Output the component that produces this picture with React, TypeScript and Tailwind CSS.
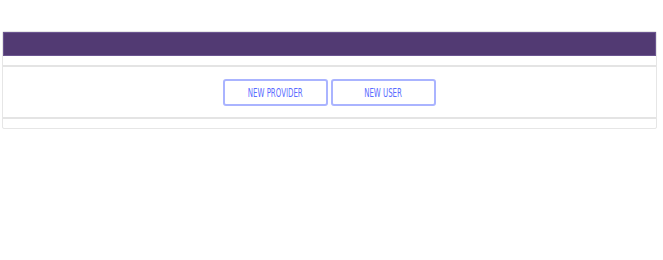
export default function App() {
  return (
    <div className="min-h-[260px] w-[663px] bg-white pt-[31px]" style={{ fontFamily: '"DejaVu Sans Condensed", "Liberation Sans", sans-serif' }}>
      <div className="ml-[2px] w-[655px] rounded-[2px] border border-[#e6e6e6]">
        <div className="h-[24px] border border-[#6b5590] bg-[#523a73]" />
        <div className="h-[11px] border-b-2 border-[#e4e4e4]" />
        <div className="flex h-[50px] items-center justify-center gap-[3px]">
          <button className="flex h-[27px] w-[105px] items-center justify-center rounded-[3px] border-2 border-[#aab4ff] bg-white pt-[1px] text-[12px] text-[#5b6dff]">
            <span className="inline-block scale-x-[0.65] whitespace-nowrap">NEW PROVIDER</span>
          </button>
          <button className="flex h-[27px] w-[105px] items-center justify-center rounded-[3px] border-2 border-[#aab4ff] bg-white pt-[1px] text-[12px] text-[#5b6dff]">
            <span className="inline-block scale-x-[0.65] whitespace-nowrap">NEW USER</span>
          </button>
        </div>
        <div className="h-[11px] border-t-2 border-[#e4e4e4]" />
      </div>
    </div>
  );
}
